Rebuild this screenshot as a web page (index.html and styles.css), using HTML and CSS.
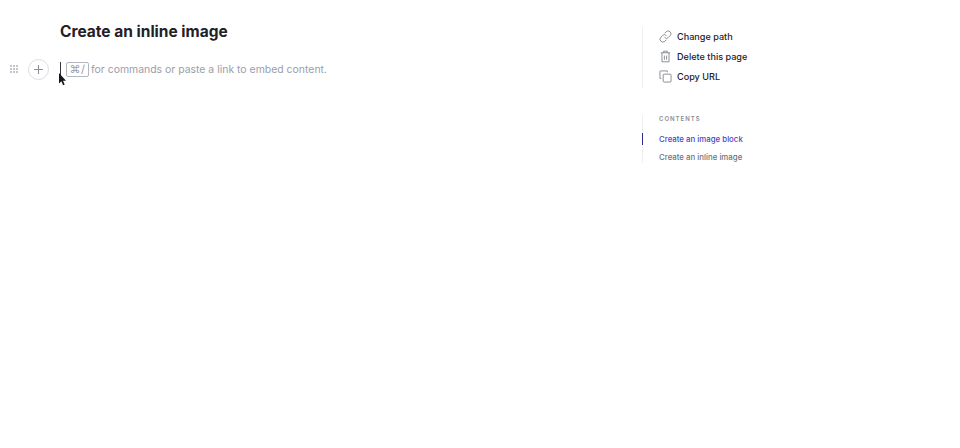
FILE: index.html
```html
<!DOCTYPE html>
<html lang="en">
<head>
<meta charset="utf-8">
<title>Create an inline image</title>
<link rel="stylesheet" href="styles.css">
</head>
<body>
<div class="page">
  <main class="editor">
    <h1 class="title">Create an inline image</h1>
    <div class="block">
      <div class="gutter">
        <svg class="grip" width="10" height="10" viewBox="0 0 10 10" fill="#c4c6cd"><rect x="1" y="1" width="2" height="2"/><rect x="4" y="1" width="2" height="2"/><rect x="7" y="1" width="2" height="2"/><rect x="1" y="4" width="2" height="2"/><rect x="4" y="4" width="2" height="2"/><rect x="7" y="4" width="2" height="2"/><rect x="1" y="7" width="2" height="2"/><rect x="4" y="7" width="2" height="2"/><rect x="7" y="7" width="2" height="2"/></svg>
        <span class="add"><svg width="9" height="9" viewBox="0 0 9 9" stroke="#8d9099" stroke-width="1.1"><path d="M4.500 0v9M0 4.500h9"/></svg></span>
      </div>
      <div class="line">
        <span class="caret"></span>
        <kbd class="key">⌘/</kbd>
        <span class="hint">for commands or paste a link to embed content.</span>
        <svg class="cursor" width="9" height="13" viewBox="0 0 9 13"><path d="M1 0v10.500l2.400-2.200 1.700 4 1.600-.7-1.700-3.900H8z" fill="#16181d"/></svg>
      </div>
    </div>
  </main>
  <aside class="side">
    <nav class="actions">
      <a class="action"><svg width="13" height="13" viewBox="0 0 14 14" fill="none" stroke="#85888f" stroke-width="1"><path d="M6 3.600l1.700-1.700a3 3 0 0 1 4.300 4.300l-1.800 1.800a3 3 0 0 1-4.200 0"/><path d="M8 10.400l-1.700 1.700a3 3 0 0 1-4.300-4.300l1.800-1.800a3 3 0 0 1 4.200 0"/></svg>Change path</a>
      <a class="action"><svg width="13" height="13" viewBox="0 0 14 14" fill="none" stroke="#85888f" stroke-width="1"><path d="M2 3h10M5 3V1.300h4V3M3.200 3v9.700h7.600V3M5.800 6v4.500M8.200 6v4.500"/></svg>Delete this page</a>
      <a class="action"><svg width="13" height="13" viewBox="0 0 14 14" fill="none" stroke="#85888f" stroke-width="1"><path d="M2.500 9H1V1.500a.5.500 0 0 1 .5-.5H9v1.500"/><rect x="4.500" y="4.500" width="8.500" height="8.500" rx="1"/></svg>Copy URL</a>
    </nav>
    <nav class="contents">
      <div class="heading">CONTENTS</div>
      <a class="toc active">Create an image block</a>
      <a class="toc">Create an inline image</a>
    </nav>
  </aside>
</div>
</body>
</html>
```
FILE: styles.css
```css
* { box-sizing: border-box; }
html, body { margin: 0; height: 100%; background: #fff; }
body { font-family: Inter, "Liberation Sans", sans-serif; overflow: hidden; }
.page { display: flex; height: 448px; }
.editor { width: 642px; flex: none; padding: 21px 0 0 0; }
.title { margin: 0 0 0 60px; font-size: 15.500px; line-height: 22px; font-weight: 700; color: #1f2127; }
.block { display: flex; align-items: center; margin-top: 15px; height: 22px; }
.gutter { width: 60px; flex: none; display: flex; align-items: center; padding-left: 9px; }
.grip { flex: none; }
.add { width: 21px; height: 21px; margin-left: 9px; border: 1px solid #dcdde1; border-radius: 50%; display: flex; align-items: center; justify-content: center; }
.line { position: relative; display: flex; align-items: center; font-size: 10.450px; color: #9b9eab; }
.caret { width: 1px; height: 15px; background: #33353c; margin-right: 5px; }
.key { font-family: inherit; font-size: 11px; line-height: 13px; height: 15px; width: 23px; text-align: center; padding: 0; border: 1px solid #b4b7c0; border-radius: 2px; color: #9b9eab; margin-right: 2px; letter-spacing: 0.5px; }
.hint { white-space: nowrap; }
.cursor { position: absolute; left: -2px; top: 11px; }
.side { padding-top: 27px; }
.actions { border-left: 1px solid #eeeef0; height: 61px; padding-left: 16px; display: flex; flex-direction: column; gap: 6px; padding-top: 2px; }
.action { display: flex; align-items: center; gap: 5px; height: 14px; font-size: 9.100px; font-weight: 500; color: #1f2127; white-space: nowrap; }
.contents { margin-top: 27px; border-left: 1px solid #eeeef0; height: 48px; display: flex; flex-direction: column; }
.heading { font-size: 6px; font-weight: 600; letter-spacing: 1px; color: #8a8d96; padding-left: 16px; line-height: 8px; }
.toc { font-size: 7.850px; font-weight: 500; color: #6f727b; padding-left: 16px; line-height: 12px; margin-top: 6px; border-left: 1px solid transparent; margin-left: -1px; white-space: nowrap; }
.toc.active { color: #4a45c7; border-left-color: #2d2a8f; margin-top: 10px; }
```
